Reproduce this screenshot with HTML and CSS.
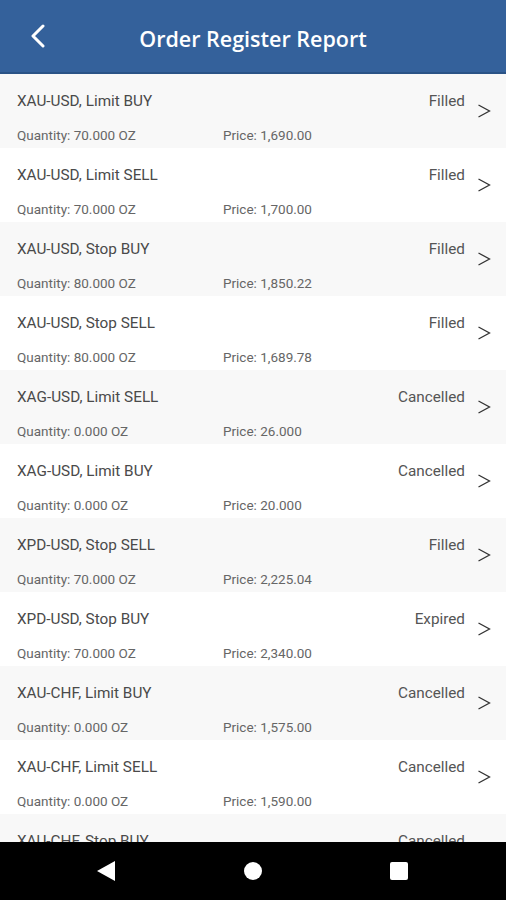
FILE: index.html
```html
<!DOCTYPE html>
<html lang="en">
<head>
    <meta charset="UTF-8">
    <meta name="viewport" content="width=device-width, initial-scale=1.0">
    <title>Order Register Report</title>
    <link rel="stylesheet" href="styles.css">
</head>
<body>
    <div class="header">
        <svg class="back" width="16" height="24" viewBox="0 0 16 24"><path d="M13 2 L3 12 L13 22" fill="none" stroke="#fff" stroke-width="3" stroke-linecap="round" stroke-linejoin="round"/></svg>
        <h1>Order Register Report</h1>
    </div>

    <div class="list">
        <div class="order">
            <div class="info">
                <div class="top"><span class="name">XAU-USD, Limit BUY</span><span class="status">Filled</span></div>
                <div class="meta"><span class="qty">Quantity: 70.000 OZ</span><span>Price: 1,690.00</span></div>
            </div>
            <svg class="arrow" width="14" height="16" viewBox="0 0 14 16"><path d="M1.5 2 L12.5 8 L1.5 14" fill="none" stroke="#333" stroke-width="1.3"/></svg>
        </div>
        <div class="order">
            <div class="info">
                <div class="top"><span class="name">XAU-USD, Limit SELL</span><span class="status">Filled</span></div>
                <div class="meta"><span class="qty">Quantity: 70.000 OZ</span><span>Price: 1,700.00</span></div>
            </div>
            <svg class="arrow" width="14" height="16" viewBox="0 0 14 16"><path d="M1.5 2 L12.5 8 L1.5 14" fill="none" stroke="#333" stroke-width="1.3"/></svg>
        </div>
        <div class="order">
            <div class="info">
                <div class="top"><span class="name">XAU-USD, Stop BUY</span><span class="status">Filled</span></div>
                <div class="meta"><span class="qty">Quantity: 80.000 OZ</span><span>Price: 1,850.22</span></div>
            </div>
            <svg class="arrow" width="14" height="16" viewBox="0 0 14 16"><path d="M1.5 2 L12.5 8 L1.5 14" fill="none" stroke="#333" stroke-width="1.3"/></svg>
        </div>
        <div class="order">
            <div class="info">
                <div class="top"><span class="name">XAU-USD, Stop SELL</span><span class="status">Filled</span></div>
                <div class="meta"><span class="qty">Quantity: 80.000 OZ</span><span>Price: 1,689.78</span></div>
            </div>
            <svg class="arrow" width="14" height="16" viewBox="0 0 14 16"><path d="M1.5 2 L12.5 8 L1.5 14" fill="none" stroke="#333" stroke-width="1.3"/></svg>
        </div>
        <div class="order">
            <div class="info">
                <div class="top"><span class="name">XAG-USD, Limit SELL</span><span class="status">Cancelled</span></div>
                <div class="meta"><span class="qty">Quantity: 0.000 OZ</span><span>Price: 26.000</span></div>
            </div>
            <svg class="arrow" width="14" height="16" viewBox="0 0 14 16"><path d="M1.5 2 L12.5 8 L1.5 14" fill="none" stroke="#333" stroke-width="1.3"/></svg>
        </div>
        <div class="order">
            <div class="info">
                <div class="top"><span class="name">XAG-USD, Limit BUY</span><span class="status">Cancelled</span></div>
                <div class="meta"><span class="qty">Quantity: 0.000 OZ</span><span>Price: 20.000</span></div>
            </div>
            <svg class="arrow" width="14" height="16" viewBox="0 0 14 16"><path d="M1.5 2 L12.5 8 L1.5 14" fill="none" stroke="#333" stroke-width="1.3"/></svg>
        </div>
        <div class="order">
            <div class="info">
                <div class="top"><span class="name">XPD-USD, Stop SELL</span><span class="status">Filled</span></div>
                <div class="meta"><span class="qty">Quantity: 70.000 OZ</span><span>Price: 2,225.04</span></div>
            </div>
            <svg class="arrow" width="14" height="16" viewBox="0 0 14 16"><path d="M1.5 2 L12.5 8 L1.5 14" fill="none" stroke="#333" stroke-width="1.3"/></svg>
        </div>
        <div class="order">
            <div class="info">
                <div class="top"><span class="name">XPD-USD, Stop BUY</span><span class="status">Expired</span></div>
                <div class="meta"><span class="qty">Quantity: 70.000 OZ</span><span>Price: 2,340.00</span></div>
            </div>
            <svg class="arrow" width="14" height="16" viewBox="0 0 14 16"><path d="M1.5 2 L12.5 8 L1.5 14" fill="none" stroke="#333" stroke-width="1.3"/></svg>
        </div>
        <div class="order">
            <div class="info">
                <div class="top"><span class="name">XAU-CHF, Limit BUY</span><span class="status">Cancelled</span></div>
                <div class="meta"><span class="qty">Quantity: 0.000 OZ</span><span>Price: 1,575.00</span></div>
            </div>
            <svg class="arrow" width="14" height="16" viewBox="0 0 14 16"><path d="M1.5 2 L12.5 8 L1.5 14" fill="none" stroke="#333" stroke-width="1.3"/></svg>
        </div>
        <div class="order">
            <div class="info">
                <div class="top"><span class="name">XAU-CHF, Limit SELL</span><span class="status">Cancelled</span></div>
                <div class="meta"><span class="qty">Quantity: 0.000 OZ</span><span>Price: 1,590.00</span></div>
            </div>
            <svg class="arrow" width="14" height="16" viewBox="0 0 14 16"><path d="M1.5 2 L12.5 8 L1.5 14" fill="none" stroke="#333" stroke-width="1.3"/></svg>
        </div>
        <div class="order">
            <div class="info">
                <div class="top"><span class="name">XAU-CHF, Stop BUY</span><span class="status">Cancelled</span></div>
                <div class="meta"><span class="qty">Quantity: 0.000 OZ</span><span>Price: 1,560.00</span></div>
            </div>
            <svg class="arrow" width="14" height="16" viewBox="0 0 14 16"><path d="M1.5 2 L12.5 8 L1.5 14" fill="none" stroke="#333" stroke-width="1.3"/></svg>
        </div>
    </div>

    <div class="navbar">
        <svg width="20" height="22" viewBox="0 0 20 22"><path d="M19 1 L19 21 L1 11 Z" fill="#fff"/></svg>
        <svg width="20" height="20" viewBox="0 0 20 20"><circle cx="10" cy="10" r="9" fill="#fff"/></svg>
        <svg width="20" height="20" viewBox="0 0 20 20"><rect x="1" y="1" width="18" height="18" rx="2" fill="#fff"/></svg>
    </div>
</body>
</html>
```

FILE: styles.css
```css
body {
    margin: 0;
    height: 900px;
    overflow: hidden;
    background: #fff;
    font-family: Roboto, "Liberation Sans", sans-serif;
}
.header {
    height: 72px;
    background: #34619b;
    border-bottom: 2px solid #2a5386;
    display: flex;
    align-items: center;
    position: relative;
}
.back {
    margin-left: 30px;
}
.header h1 {
    flex: 1;
    margin: 4px 0 0 -46px;
    text-align: center;
    font-family: "Open Sans", sans-serif;
    font-weight: 600;
    font-size: 21.5px;
    color: #fff;
}
.order {
    height: 74px;
    display: flex;
    box-sizing: border-box;
    padding: 18px 15px 0 17px;
}
.order:nth-child(odd) {
    background: #f8f8f8;
}
.info {
    flex: 1;
}
.top {
    display: flex;
    justify-content: space-between;
    line-height: 18px;
    font-size: 15.3px;
    color: #4a4a4a;
}
.status {
    color: #555;
}
.meta {
    display: flex;
    margin-top: 17px;
    font-size: 13.5px;
    line-height: 16px;
    color: #666;
}
.qty {
    width: 206px;
}
.arrow {
    margin: 11px 0 0 12px;
}
.navbar {
    position: fixed;
    left: 0;
    bottom: 0;
    width: 100%;
    height: 58px;
    background: #000;
    display: flex;
    align-items: center;
    justify-content: space-between;
    padding: 0 97px 0 96px;
    box-sizing: border-box;
}
```
